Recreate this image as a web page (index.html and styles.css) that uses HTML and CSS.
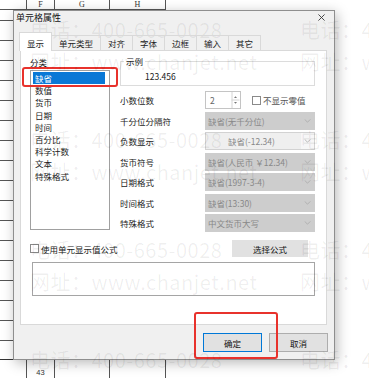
FILE: index.html
```html
<!DOCTYPE html>
<html lang="zh-CN">
<head>
  <meta charset="UTF-8" />
  <meta name="viewport" content="width=device-width, initial-scale=1.0" />
  <title>单元格属性</title>
  <link rel="stylesheet" href="styles.css">
</head>
<body>
  <div class="sheet">
    <div class="sheet-head">
      <span></span><span>F</span><span>G</span><span>H</span>
    </div>
    <div class="sheet-body"></div>
    <div class="sheet-row">
      <span></span><span>43</span><span></span><span></span>
    </div>
  </div>

  <div class="dialog">
    <div class="dialog-title">
      <span>单元格属性</span>
      <svg class="close" viewBox="0 0 8 8"><path d="M0.5 0.5 L7.5 7.5 M7.5 0.5 L0.5 7.5" /></svg>
    </div>

    <ul class="tabs">
      <li class="active">显示</li>
      <li>单元类型</li>
      <li>对齐</li>
      <li>字体</li>
      <li>边框</li>
      <li>输入</li>
      <li>其它</li>
    </ul>

    <div class="panel">
      <div class="left-col">
        <div class="caption">分类</div>
        <ul class="list">
          <li class="selected">缺省</li>
          <li>数值</li>
          <li>货币</li>
          <li>日期</li>
          <li>时间</li>
          <li>百分比</li>
          <li>科学计数</li>
          <li>文本</li>
          <li>特殊格式</li>
        </ul>
      </div>

      <div class="right-col">
        <fieldset class="sample">
          <legend>示例</legend>
          <span>123.456</span>
        </fieldset>

        <div class="form-grid">
          <label>小数位数</label>
          <div class="ctrl-line">
            <div class="spinner">
              <span>2</span>
              <svg class="spin-arrows" viewBox="0 0 8 16">
                <path class="tri" d="M2.5 6 L4 4.2 L5.5 6 Z M2.5 10 L4 11.8 L5.5 10 Z" />
                <path class="sep" d="M0 8 H8 M0.5 0 V16" />
              </svg>
            </div>
            <label class="check"><span class="box"></span>不显示零值</label>
          </div>

          <label>千分位分隔符</label>
          <div class="select">缺省(无千分位)<svg class="chev" viewBox="0 0 8 5"><polyline points="0.5,0.5 4,4 7.5,0.5" /></svg></div>

          <label>负数显示</label>
          <div class="select alt"><span class="field">缺省(-12.34)</span><span class="drop"><svg class="chev" viewBox="0 0 8 5"><polyline points="0.5,0.5 4,4 7.5,0.5" /></svg></span></div>

          <label>货币符号</label>
          <div class="select">缺省(人民币 ￥12.34)<svg class="chev" viewBox="0 0 8 5"><polyline points="0.5,0.5 4,4 7.5,0.5" /></svg></div>

          <label>日期格式</label>
          <div class="select">缺省(1997-3-4)<svg class="chev" viewBox="0 0 8 5"><polyline points="0.5,0.5 4,4 7.5,0.5" /></svg></div>

          <label>时间格式</label>
          <div class="select">缺省(13:30)<svg class="chev" viewBox="0 0 8 5"><polyline points="0.5,0.5 4,4 7.5,0.5" /></svg></div>

          <label>特殊格式</label>
          <div class="select">中文货币大写<svg class="chev" viewBox="0 0 8 5"><polyline points="0.5,0.5 4,4 7.5,0.5" /></svg></div>
        </div>
      </div>

      <div class="formula-line">
        <label class="check"><span class="box"></span>使用单元显示值公式</label>
        <button class="flat">选择公式</button>
      </div>
      <div class="formula-box"></div>
    </div>

    <div class="dialog-foot">
      <button class="primary">确定</button>
      <button>取消</button>
    </div>
  </div>

  <span class="mark mark-list"></span>
  <span class="mark mark-ok"></span>

  <div class="watermark">
    <div class="wm"><p>电话：400-665-0028</p><p>网址：www.chanjet.net</p></div>
    <div class="wm"><p>电话：400-665-0028</p><p>网址：www.chanjet.net</p></div>
    <div class="wm"><p>电话：400-665-0028</p><p>网址：www.chanjet.net</p></div>
    <div class="wm"><p>电话：400-665-0028</p><p>网址：www.chanjet.net</p></div>
    <div class="wm"><p>电话：400-665-0028</p><p>网址：www.chanjet.net</p></div>
    <div class="wm"><p>电话：400-665-0028</p><p>网址：www.chanjet.net</p></div>
    <div class="wm"><p>电话：400-665-0028</p><p>网址：www.chanjet.net</p></div>
    <div class="wm"><p>电话：400-665-0028</p><p>网址：www.chanjet.net</p></div>
  </div>
</body>
</html>
```

FILE: styles.css
```css
* {
  box-sizing: border-box;
}

body {
  margin: 0;
  width: 369px;
  height: 378px;
  overflow: hidden;
  position: relative;
  background-color: #fff;
  font-family: "Noto Sans CJK SC", "Noto Sans", sans-serif;
  font-size: 8.5px;
  color: #1a1a1a;
}

ul {
  margin: 0;
  padding: 0;
  list-style: none;
}

/* 背景表格 */
.sheet {
  width: 166px;
}

.sheet-head,
.sheet-row {
  display: grid;
  grid-template-columns: 27px 28px 55px 56px;
}

.sheet-head {
  height: 10px;
  border-bottom: 1px solid #555;
}

.sheet-head span,
.sheet-row span {
  border-right: 1px solid #555;
  text-align: center;
  font-family: "Liberation Serif", serif;
  font-size: 8px;
  line-height: 9px;
  color: #333;
}

.sheet-body {
  height: 349px;
  background: repeating-linear-gradient(to bottom, transparent 0, transparent 10px, #555 10px, #555 11px, transparent 11px, transparent 20px);
}

.sheet-row {
  height: 19px;
  border-top: 1px solid #333;
}

.sheet-row span {
  padding-top: 8px;
  line-height: 10px;
  font-family: "Liberation Sans", sans-serif;
  font-size: 7.5px;
}

/* 对话框 */
.dialog {
  position: absolute;
  left: 13px;
  top: 10px;
  width: 322px;
  height: 350px;
  background-color: #f0f0f0;
  border: 1px solid #8e8e8e;
  box-shadow: 2px 3px 12px rgba(0, 0, 0, 0.28);
  display: flex;
  flex-direction: column;
}

.dialog-title {
  height: 20px;
  display: flex;
  justify-content: space-between;
  padding: 1px 9px 0 2px;
  font-size: 9px;
  line-height: 12px;
  color: #111;
}

.close {
  width: 7px;
  height: 7px;
  margin-top: 2px;
  stroke: #333;
  stroke-width: 1;
  fill: none;
}

.tabs {
  display: flex;
  align-items: flex-end;
  height: 19px;
  margin-left: 5px;
  position: relative;
  z-index: 1;
}

.tabs li {
  height: 15px;
  padding: 0 7px;
  line-height: 14px;
  border: 1px solid #d9d9d9;
  border-bottom: none;
  margin-right: -1px;
  color: #222;
}

.tabs li.active {
  height: 19px;
  margin-bottom: -1px;
  padding-top: 3px;
  background-color: #fff;
}

.panel {
  width: 307px;
  height: 275px;
  margin-left: 6px;
  background-color: #fff;
  border: 1px solid #d9d9d9;
  display: grid;
  grid-template-columns: 80px 195px;
  grid-template-rows: auto auto auto;
  align-content: start;
  column-gap: 10px;
  padding: 5px 11px 0 9px;
}

.caption {
  height: 13px;
  line-height: 12px;
  color: #222;
}

.list {
  margin-top: 1px;
  height: 160px;
  border: 1px solid #a0a0a0;
  padding: 1px 4px 0 2px;
}

.list li {
  height: 12.2px;
  line-height: 12.2px;
  padding-left: 2px;
  color: #222;
}

.list li.selected {
  background-color: #0a78d6;
  color: #fff;
}

.sample {
  margin: 0;
  min-width: 0;
  padding: 3px 0 0 24px;
  border: 1px solid #dcdcdc;
  height: 30px;
}

.sample legend {
  margin-left: -21px;
  padding: 0 2px;
  line-height: 10px;
  color: #222;
}

.sample span {
  display: block;
  line-height: 15px;
  color: #222;
}

.form-grid {
  margin-top: 4px;
  display: grid;
  grid-template-columns: 85px 110px;
  grid-auto-rows: 20.5px;
  align-items: center;
}

.form-grid > label {
  color: #222;
}

.ctrl-line {
  display: flex;
  align-items: center;
}

.spinner {
  width: 36px;
  height: 18px;
  border: 1px solid #c4c4c4;
  display: flex;
  justify-content: space-between;
  align-items: center;
  padding-left: 4px;
  color: #666;
}

.spin-arrows {
  width: 9px;
  height: 16px;
}

.spin-arrows .tri {
  fill: #777;
}

.spin-arrows .sep {
  stroke: #d4d4d4;
  stroke-width: 1;
  fill: none;
}

.check {
  display: flex;
  align-items: center;
  color: #555;
}

.check .box {
  width: 9px;
  height: 9px;
  border: 1px solid #8a8a8a;
  background-color: #fff;
  margin-right: 2px;
}

.ctrl-line .check {
  margin-left: 11px;
}

.select {
  height: 18px;
  display: flex;
  align-items: center;
  justify-content: space-between;
  padding: 0 4px 0 3px;
  background-color: #cdcdcd;
  color: #888;
  white-space: nowrap;
}

.chev {
  width: 7px;
  height: 4px;
  fill: none;
  stroke: #a9a9a9;
  stroke-width: 1;
}

.select.alt {
  padding: 0;
  background-color: #e6e6e6;
  border: 1px solid #d2d2d2;
}

.select.alt .field {
  flex: 1;
  height: 100%;
  line-height: 16px;
  padding-left: 22px;
  background-color: #efefef;
}

.select.alt .drop {
  width: 13px;
  height: 100%;
  display: flex;
  align-items: center;
  justify-content: center;
  background-color: #f7f7f7;
}

.formula-line {
  grid-column: 1 / -1;
  margin-top: 6.5px;
  height: 17px;
  display: flex;
  align-items: center;
}

.formula-line .check {
  color: #222;
}

button {
  font-family: inherit;
  font-size: 8.5px;
  color: #111;
  background-color: #e1e1e1;
  border: 1px solid #adadad;
  padding: 0;
  cursor: pointer;
}

button.flat {
  width: 76px;
  height: 17px;
  margin-left: auto;
  margin-right: 7px;
  border-color: #e1e1e1;
}

.formula-box {
  grid-column: 1 / -1;
  margin: 5px 0 0 2px;
  width: 283px;
  height: 34px;
  border: 1px solid #a5a5a5;
}

.dialog-foot {
  display: flex;
  justify-content: flex-end;
  gap: 7px;
  padding: 8px 6px 0 0;
}

.dialog-foot button {
  width: 59px;
  height: 19px;
}

.dialog-foot button.primary {
  border-color: #0078d7;
}

/* 红色标注框 */
.mark {
  position: absolute;
  border: 2px solid #e8322c;
  border-radius: 3px;
}

.mark-list {
  left: 22px;
  top: 67px;
  width: 96px;
  height: 20px;
}

.mark-ok {
  left: 194px;
  top: 312px;
  width: 84px;
  height: 47px;
}

/* 水印 */
.watermark {
  position: absolute;
  inset: 0;
  pointer-events: none;
  display: grid;
  grid-template-columns: repeat(2, 270px);
  grid-auto-rows: 110px;
  padding: 14px 0 0 30px;
  overflow: hidden;
}

.wm p {
  margin: 0;
  font-size: 20px;
  line-height: 32px;
  letter-spacing: 0.5px;
  white-space: nowrap;
  color: rgba(0, 0, 0, 0.065);
}
```
